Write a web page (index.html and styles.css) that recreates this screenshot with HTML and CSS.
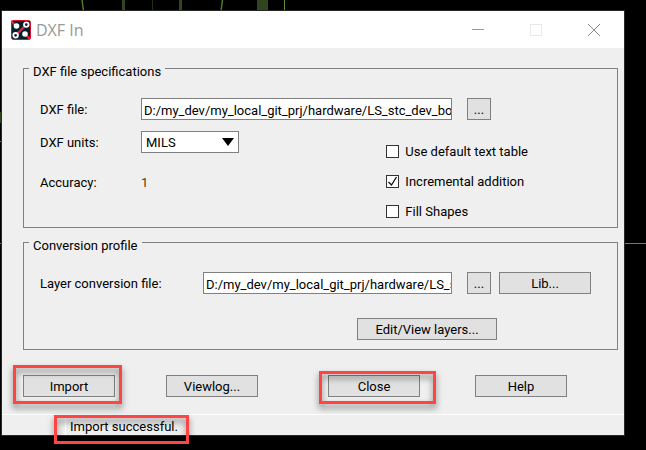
FILE: index.html
```html
<!DOCTYPE html>
<html lang="en">
<head>
    <meta charset="UTF-8">
    <meta name="viewport" content="width=device-width, initial-scale=1.0">
    <title>DXF In</title>
    <link rel="stylesheet" href="styles.css">
</head>
<body>
    <!-- Board canvas behind the dialog -->
    <svg class="canvas" aria-hidden="true">
        <path d="M123.500 0v11M180.500 0v11" stroke="#30451d" stroke-width="3"/>
        <path d="M152.500 0v11" stroke="#1f2f14"/>
        <path d="M82 0l1.500 11M222.500 0l-1.500 11" stroke="#4f7a2c" stroke-width="1.500"/>
        <rect x="257" y="0" width="11" height="11" fill="#30451d"/>
        <path d="M284.500 0v11" stroke="#5f8f35"/>
        <rect x="0" y="112" width="2" height="11" fill="#30451d"/>
        <rect x="0" y="141" width="2" height="1" fill="#6b8540"/>
        <rect x="0" y="243" width="100%" height="1" fill="#6b8540"/>
    </svg>

    <main class="dialog">
        <header class="title-bar">
            <svg class="app-icon" viewBox="0 0 20 20" aria-hidden="true">
                <rect x="0.500" y="0.500" width="19" height="19" rx="2" fill="#04222e" stroke="#d8102e"/>
                <path d="M0 1l5 5M5 15L15 5M14 14l5 5" stroke="#ee1c3a" stroke-width="2.400"/>
                <circle cx="5.500" cy="6" r="2.800" fill="#fff"/>
                <circle cx="14" cy="14" r="2.800" fill="#fff"/>
                <circle cx="15.300" cy="4.600" r="2.300" fill="#04222e" stroke="#fff" stroke-width="1.800"/>
                <circle cx="4.600" cy="15.300" r="2.300" fill="#04222e" stroke="#fff" stroke-width="1.800"/>
            </svg>
            <h1>DXF In</h1>
            <div class="window-controls">
                <button type="button" aria-label="Minimize">
                    <svg viewBox="0 0 12 12"><path d="M0 5.500h12" stroke="#999"/></svg>
                </button>
                <button type="button" aria-label="Maximize" disabled>
                    <svg viewBox="0 0 12 12"><path d="M.5.5h11v11H.5z" fill="none" stroke="#e9e9e9"/></svg>
                </button>
                <button type="button" aria-label="Close window">
                    <svg viewBox="0 0 12 12"><path d="M0 0l12 12M12 0L0 12" stroke="#8c8c8c"/></svg>
                </button>
            </div>
        </header>

        <form class="content">
            <fieldset class="group">
                <legend>DXF file specifications</legend>
                <div class="row row-file">
                    <label for="dxf-file">DXF file:</label>
                    <input type="text" id="dxf-file" value="D:/my_dev/my_local_git_prj/hardware/LS_stc_dev_board">
                    <button type="button" class="btn btn-browse" aria-label="Browse DXF file">...</button>
                </div>
                <div class="options">
                    <div class="settings">
                        <div class="row">
                            <label for="dxf-units">DXF units:</label>
                            <select id="dxf-units">
                                <option>MILS</option>
                                <option>INCHES</option>
                                <option>MM</option>
                            </select>
                        </div>
                        <div class="row">
                            <label for="accuracy">Accuracy:</label>
                            <output id="accuracy">1</output>
                        </div>
                    </div>
                    <div class="checks">
                        <div class="check">
                            <input type="checkbox" id="default-table">
                            <label for="default-table">Use default text table</label>
                        </div>
                        <div class="check">
                            <input type="checkbox" id="incremental" checked>
                            <label for="incremental">Incremental addition</label>
                        </div>
                        <div class="check">
                            <input type="checkbox" id="fill-shapes">
                            <label for="fill-shapes">Fill Shapes</label>
                        </div>
                    </div>
                </div>
            </fieldset>

            <fieldset class="group">
                <legend>Conversion profile</legend>
                <div class="row row-layer">
                    <label for="layer-file">Layer conversion file:</label>
                    <input type="text" id="layer-file" value="D:/my_dev/my_local_git_prj/hardware/LS_stc_dev_board">
                    <button type="button" class="btn btn-browse" aria-label="Browse layer conversion file">...</button>
                    <button type="button" class="btn btn-lib">Lib...</button>
                </div>
                <div class="row-edit">
                    <button type="button" class="btn btn-edit">Edit/View layers...</button>
                </div>
            </fieldset>

            <div class="actions">
                <div class="mark mark-import"><button type="button" class="btn">Import</button></div>
                <div><button type="button" class="btn">Viewlog...</button></div>
                <div class="mark mark-close"><button type="button" class="btn">Close</button></div>
                <div><button type="button" class="btn">Help</button></div>
            </div>
        </form>

        <footer class="status-bar">
            <p class="mark mark-status">Import successful.</p>
        </footer>
    </main>
</body>
</html>
```
FILE: styles.css
```css
:root {
    --panel: #efefef;
    --border: #808080;
    --button: #e1e1e1;
    --mark: #ff4444;
}

* {
    box-sizing: border-box;
}

body {
    margin: 0;
    padding: 11px 22px 15px 2px;
    background-color: #000;
    color: #000;
    font-family: Roboto, "Open Sans", sans-serif;
    font-size: 13px;
    line-height: 18px;
}

.canvas {
    position: absolute;
    top: 0;
    left: 0;
    width: 100%;
    height: 100%;
}

.dialog {
    position: relative;
    background-color: var(--panel);
    outline: 1px solid #2a2a2a;
}

/* Title bar */
.title-bar {
    display: flex;
    align-items: center;
    height: 37px;
    padding: 0 1px 0 9px;
    background-color: #fff;
}

.app-icon {
    width: 20px;
    height: 20px;
}

.title-bar h1 {
    margin: 0 auto 0 5px;
    color: #999;
    font-family: "Open Sans", sans-serif;
    font-size: 16px;
    font-weight: 400;
}

.window-controls {
    display: flex;
}

.window-controls button {
    display: flex;
    justify-content: center;
    width: 58px;
    padding: 0;
    border: none;
    background: none;
}

.window-controls svg {
    width: 12px;
    height: 12px;
}

/* Groups */
.content {
    padding: 8px 6px 17px 21px;
}

.group {
    margin: 0 0 2px;
    padding: 0 26px 7px 16px;
    border: 1px solid var(--border);
}

.group legend {
    height: 24px;
    margin-left: -11px;
    padding: 7px 4px 0;
}

.row {
    display: flex;
    align-items: center;
    min-height: 22px;
}

.row label {
    flex: none;
    width: 101px;
    padding-top: 2px;
}

.row-file {
    padding: 0 100px 0 0;
    margin-top: 18px;
}

.row-layer {
    margin-top: 18px;
}

.row-layer label {
    width: 163px;
}

input[type="text"],
select {
    height: 22px;
    border: 1px solid var(--border);
    border-radius: 0;
    background-color: #fff;
    color: #000;
    font: inherit;
}

input[type="text"] {
    flex: 1;
    min-width: 0;
    padding: 2px 0 0 2px;
}

select {
    width: 98px;
    padding: 2px 4px 0;
    appearance: none;
    background-image: url("data:image/svg+xml,%3Csvg xmlns='http://www.w3.org/2000/svg' width='12' height='8'%3E%3Cpath d='M0 0h12L6 8z'/%3E%3C/svg%3E");
    background-repeat: no-repeat;
    background-position: right 4px center;
}

output {
    padding-top: 2px;
    color: #5a3410;
}

.options {
    display: flex;
    justify-content: space-between;
    padding-right: 63px;
}

.settings {
    display: grid;
    gap: 18px;
    align-content: start;
    padding-top: 11px;
}

.checks {
    display: grid;
    gap: 12px;
    padding-top: 22px;
}

.check {
    display: flex;
    align-items: center;
    gap: 6px;
    height: 18px;
}

.check label {
    padding-top: 2px;
}

.check input {
    width: 13px;
    height: 13px;
    margin: 0;
    appearance: none;
    border: 1px solid #333;
    background-color: #fff;
}

.check input:checked {
    background-image: url("data:image/svg+xml,%3Csvg xmlns='http://www.w3.org/2000/svg' viewBox='0 0 11 11'%3E%3Cpath d='M1.500 6l3 3 5-8' fill='none' stroke='%23111' stroke-width='1.300'/%3E%3C/svg%3E");
}

/* Buttons */
.btn {
    width: 92px;
    height: 22px;
    padding: 2px 0 0;
    border: 1px solid var(--border);
    background-color: var(--button);
    color: #000;
    font: inherit;
    line-height: 18px;
}

.btn-browse {
    width: 24px;
    margin-left: 15px;
}

.btn-lib {
    margin-left: 8px;
}

.row-edit {
    padding: 24px 94px 2px 0;
    text-align: right;
}

.btn-edit {
    width: 140px;
}

.actions {
    display: grid;
    grid-template-columns: 143fr 162fr 147fr 143fr;
    padding-top: 23px;
}

.actions div {
    display: flex;
    justify-self: start;
}

/* Status bar */
.status-bar {
    display: flex;
    height: 21px;
    padding-left: 63px;
    border-top: 1px solid #fff;
}

.status-bar p {
    margin: 3px 0 0;
    padding-left: 4px;
    border-left: 1px solid #fff;
}

/* Highlight frames over the controls */
.mark {
    position: relative;
}

.mark::after {
    content: "";
    position: absolute;
    border: 3px solid var(--mark);
    filter: drop-shadow(0 4px 3px rgba(0, 0, 0, 0.5));
    pointer-events: none;
}

.mark-import::after {
    inset: -10px -7px -7px -10px;
}

.mark-close::after {
    inset: -4px -16px -7px -9px;
}

.mark-status::after {
    inset: -3px -11px -9px -12px;
}
```
